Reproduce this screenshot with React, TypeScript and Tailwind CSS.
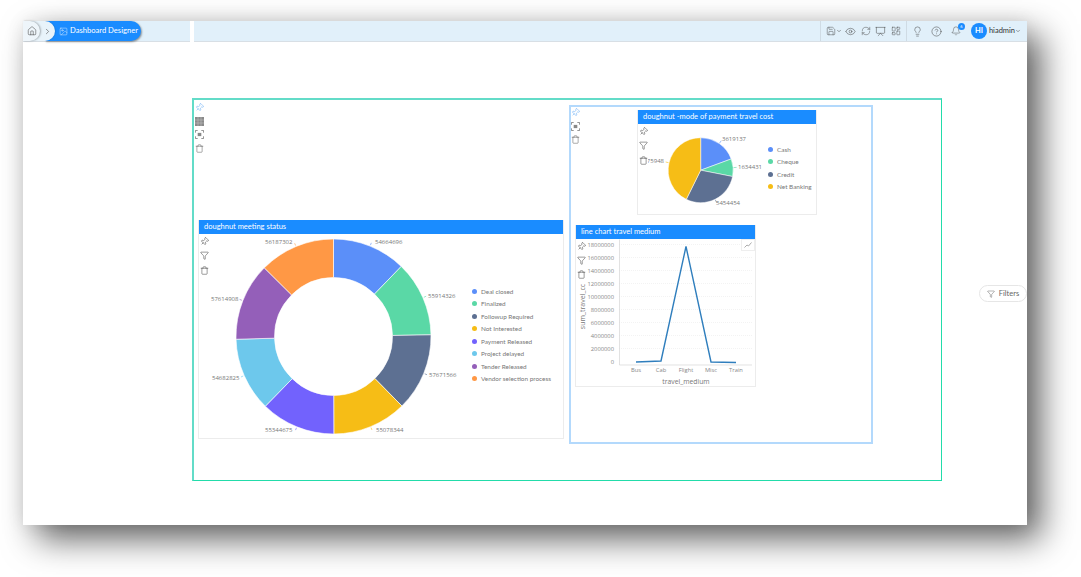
import {
  Bell,
  ChevronDown,
  ChevronRight,
  CircleHelp,
  Eye,
  Funnel,
  House,
  Image,
  LayoutDashboard,
  Lightbulb,
  Pin,
  Presentation,
  RefreshCw,
  Save,
  Trash,
} from "lucide-react";

const meetingData = [
  { name: "Deal closed", value: 54664696, color: "#5b8ff9", x: 375, y: 243.5 },
  { name: "Finalized", value: 55914326, color: "#5ad8a6", x: 428, y: 297.5 },
  { name: "Followup Required", value: 57671566, color: "#5d7092", x: 429, y: 376.5 },
  { name: "Not Interested", value: 55078344, color: "#f6bd16", x: 376, y: 431.5 },
  { name: "Payment Released", value: 55344675, color: "#7262fd", x: 265, y: 431.5 },
  { name: "Project delayed", value: 54682825, color: "#6dc8ec", x: 212, y: 379.5 },
  { name: "Tender Released", value: 57614908, color: "#945fb9", x: 211, y: 300.5 },
  { name: "Vendor selection process", value: 56187302, color: "#ff9845", x: 265, y: 243.5 },
];

const paymentData = [
  { name: "Cash", value: 3619137, color: "#5b8ff9", label: "3619137", x: 722, y: 140.5 },
  { name: "Cheque", value: 1634431, color: "#5ad8a6", label: "1634431", x: 738, y: 168.5 },
  { name: "Credit", value: 5454454, color: "#5d7092", label: "5454454", x: 716, y: 204 },
  { name: "Net Banking", value: 7975948, color: "#f6bd16", label: "7975948", x: 640, y: 162 },
];

const yTicks = ["18000000", "16000000", "14000000", "12000000", "10000000", "8000000", "6000000", "4000000", "2000000", "0"];
const xTicks = [
  { name: "Bus", x: 636 },
  { name: "Cab", x: 661 },
  { name: "Flight", x: 686 },
  { name: "Misc", x: 711 },
  { name: "Train", x: 736 },
];

function polar(cx: number, cy: number, r: number, deg: number) {
  const a = ((deg - 90) * Math.PI) / 180;
  return [cx + r * Math.cos(a), cy + r * Math.sin(a)];
}

function slicePath(cx: number, cy: number, r: number, inner: number, from: number, to: number) {
  const [x1, y1] = polar(cx, cy, r, from);
  const [x2, y2] = polar(cx, cy, r, to);
  const large = to - from > 180 ? 1 : 0;
  if (inner === 0) return `M${cx} ${cy}L${x1} ${y1}A${r} ${r} 0 ${large} 1 ${x2} ${y2}Z`;
  const [x3, y3] = polar(cx, cy, inner, to);
  const [x4, y4] = polar(cx, cy, inner, from);
  return `M${x1} ${y1}A${r} ${r} 0 ${large} 1 ${x2} ${y2}L${x3} ${y3}A${inner} ${inner} 0 ${large} 0 ${x4} ${y4}Z`;
}

function withAngles<T extends { value: number }>(rows: T[]) {
  const total = rows.reduce((sum, r) => sum + r.value, 0);
  let at = 0;
  return rows.map((r) => {
    const from = at;
    at += (r.value / total) * 360;
    return { ...r, from, to: at };
  });
}

function ScanIcon() {
  return (
    <svg width="9" height="9" viewBox="0 0 10 10" fill="none" stroke="#666" strokeWidth="0.8">
      <path d="M0.5 3V0.5H3M7 0.5H9.5V3M9.5 7V9.5H7M3 9.5H0.5V7" />
      <rect x="3" y="3.2" width="4" height="3.6" fill="#888" stroke="none" />
    </svg>
  );
}

function GridIcon() {
  return (
    <svg width="9" height="9" viewBox="0 0 9 9">
      <rect width="9" height="9" fill="#8a8a8a" />
      <path d="M0 3H9M0 6H9M3 0V9M6 0V9" stroke="#c4c4c4" strokeWidth="0.5" />
    </svg>
  );
}

function Legend({ rows }: { rows: { name: string; color: string }[] }) {
  return (
    <ul className="flex flex-col gap-[5px] font-['Lato','Liberation_Sans',sans-serif] text-[6.4px] leading-[7.5px] text-[#777]">
      {rows.map((r) => (
        <li key={r.name} className="flex items-center gap-[4.5px] whitespace-nowrap">
          <span className="h-[5px] w-[5px] rounded-full" style={{ background: r.color }} />
          {r.name}
        </li>
      ))}
    </ul>
  );
}

function WidgetTitle({ children }: { children: string }) {
  return (
    <div className="flex h-[13.5px] shrink-0 items-center bg-[#1a8cff] pl-[5px] font-['Lato','Liberation_Sans',sans-serif] text-[7.5px] text-white">
      {children}
    </div>
  );
}

function WidgetTools({ top, gaps }: { top: string; gaps: string }) {
  return (
    <div className={`absolute left-0 flex w-[10px] flex-col items-center bg-white pb-[2px] text-[#333] ${top} ${gaps}`}>
      <Pin size={9} strokeWidth={1.3} className="rotate-45" />
      <Funnel size={9} strokeWidth={1.3} />
      <Trash size={9} strokeWidth={1.3} />
    </div>
  );
}

function MeetingChart() {
  return (
    <svg className="block h-[205px] w-[270px] shrink-0" viewBox="199 233.5 270 205">
      {withAngles(meetingData).map((s) => {
        const mid = (s.from + s.to) / 2;
        const [lx1, ly1] = polar(333.5, 336, 98.5, mid);
        const [lx2, ly2] = polar(333.5, 336, 101, mid);
        return (
          <g key={s.name}>
            <path d={slicePath(333.5, 336, 97.5, 59, s.from, s.to)} fill={s.color} stroke="#fff" strokeWidth="0.6" />
            <path d={`M${lx1} ${ly1}L${lx2} ${ly2}`} stroke={s.color} strokeWidth="0.6" fill="none" />
            <text x={s.x} y={s.y} fontSize="6" fill="#777" fontFamily="Open Sans, sans-serif">
              {s.value}
            </text>
          </g>
        );
      })}
    </svg>
  );
}

function PaymentChart() {
  return (
    <svg className="block h-[90px] w-[129px] shrink-0" viewBox="638 123.5 129 90">
      {withAngles(paymentData).map((s) => {
        const mid = (s.from + s.to) / 2;
        const [lx1, ly1] = polar(700.7, 169.7, 33, mid);
        const [lx2, ly2] = polar(700.7, 169.7, 36, mid);
        return (
          <g key={s.name}>
            <path d={slicePath(700.7, 169.7, 32.5, 0, s.from, s.to)} fill={s.color} stroke="#fff" strokeWidth="0.5" />
            <path d={`M${lx1} ${ly1}L${lx2} ${ly2}`} stroke={s.color} strokeWidth="0.6" fill="none" />
            <text x={s.x} y={s.y} fontSize="6" fill="#777" fontFamily="Open Sans, sans-serif">
              {s.label}
            </text>
          </g>
        );
      })}
    </svg>
  );
}

function TravelChart() {
  return (
    <svg className="block h-[148px] w-[179px]" viewBox="576 238.5 179 148" fontFamily="Open Sans, sans-serif">
      {yTicks.map((t, i) => {
        const y = 244 + i * 13;
        return (
          <g key={t}>
            {i < 9 && <path d={`M619 ${y}H752`} stroke="#e6e6e6" strokeWidth="0.5" strokeDasharray="1 1" />}
            <text x="614" y={y + 2} fontSize="5.8" fill="#888" textAnchor="end">
              {t}
            </text>
          </g>
        );
      })}
      <path d="M619.5 239V364.5H752" stroke="#d5d5d5" strokeWidth="0.7" fill="none" />
      <polyline points="636,361.5 661,360.5 686,246 711,361.5 736,362" fill="none" stroke="#2f7ebd" strokeWidth="1.4" />
      {xTicks.map((t) => (
        <text key={t.name} x={t.x} y="371.5" fontSize="5.8" fill="#888" textAnchor="middle">
          {t.name}
        </text>
      ))}
      <text x="686" y="383.5" fontSize="6.8" fill="#777" textAnchor="middle">
        travel_medium
      </text>
      <text transform="translate(584.5 306) rotate(-90)" fontSize="7" fill="#777" textAnchor="middle">
        sum_travel_cc
      </text>
    </svg>
  );
}

export default function App() {
  return (
    <div className="h-[577px] w-[1081px] overflow-hidden bg-white pl-[23px] pt-[21px]">
      <div className="relative h-[504px] w-[1004px] bg-white shadow-[14px_14px_32px_rgba(0,0,0,0.62),0_0_18px_rgba(0,0,0,0.07)]">
        <header className="flex h-[21px] gap-[4px] font-['Lato','Liberation_Sans',sans-serif]">
          <div className="flex w-[167px] items-center border-b border-[#d8dfe5] bg-[#e1f0fa]">
            <div className="z-20 flex h-[20px] w-[17px] items-center justify-center rounded-r-full bg-[#eef5fa] shadow-[1px_0_2px_rgba(0,0,0,0.3)]">
              <House size={10} strokeWidth={1.3} className="text-[#444]" />
            </div>
            <div className="z-10 -ml-[6px] flex h-[20px] w-[21px] items-center justify-end rounded-r-full bg-[#e8f3fa] pr-[3px] shadow-[1px_0_1px_rgba(0,0,0,0.1)]">
              <ChevronRight size={9} strokeWidth={1.5} className="text-[#444]" />
            </div>
            <div className="-ml-[10px] flex h-[20px] w-[96px] items-center rounded-r-full bg-[#1a8cff] pl-[14px] text-[7.6px] whitespace-nowrap text-white shadow-[1px_1px_2px_rgba(0,0,0,0.4)]">
              <Image size={9} strokeWidth={1.1} className="mr-[2px] shrink-0" />
              Dashboard Designer
            </div>
          </div>
          <div className="flex flex-1 items-center justify-end border-b border-[#d8dfe5] bg-[#e1f0fa] text-[#444]">
            <div className="flex h-full w-[87px] items-center border-x border-[#cfdbe4] pl-[5px]">
              <Save size={10} strokeWidth={1.1} className="shrink-0" />
              <ChevronDown size={6} className="mr-[3px] shrink-0" />
              <Eye size={11} strokeWidth={1.1} className="mr-[5px] shrink-0" />
              <RefreshCw size={10} strokeWidth={1.1} className="mr-[4px] shrink-0" />
              <Presentation size={11} strokeWidth={1.1} className="mr-[5px] shrink-0" />
              <LayoutDashboard size={10} strokeWidth={1.1} className="shrink-0" />
            </div>
            <Lightbulb size={11} strokeWidth={1.1} className="ml-[5px] mr-[8.5px]" />
            <CircleHelp size={11} strokeWidth={1.1} className="mr-[8.5px]" />
            <div className="relative mr-[10px]">
              <Bell size={10} strokeWidth={1.1} />
              <span className="absolute -right-[4px] -top-[3px] flex h-[7px] w-[7px] items-center justify-center rounded-full bg-[#1a8cff] text-[4px] text-white">
                6
              </span>
            </div>
            <div className="flex h-[16px] w-[16px] items-center justify-center rounded-full bg-[#1a8cff] text-[7.5px] font-bold text-white">
              HI
            </div>
            <span className="ml-[2px] text-[7.5px] text-[#333]">hiadmin</span>
            <ChevronDown size={6} className="mr-[6px]" />
          </div>
        </header>

        <main className="relative pt-[56px]">
          <section className="relative ml-[169px] flex h-[383px] w-[750px] border-t-2 border-l-2 border-r border-b border-t-[#63dcc8] border-l-[#63dcc8] border-r-[#22dcaa] border-b-[#22dcaa]">
            <div className="absolute left-[0.5px] top-[3px] flex w-[9px] flex-col items-center gap-[4.5px] text-[#444]">
              <Pin size={9} strokeWidth={1.2} className="rotate-45 text-[#4a9ff5]" />
              <GridIcon />
              <ScanIcon />
              <Trash size={9} strokeWidth={1.2} />
            </div>

            <div className="ml-[4px] mt-[120px] flex h-[219px] w-[366px] flex-col border-x border-b border-[#ececec]">
              <WidgetTitle>doughnut meeting status</WidgetTitle>
              <div className="relative flex">
                <WidgetTools top="top-[3px]" gaps="gap-[5.5px]" />
                <MeetingChart />
                <div className="ml-[2.5px] mt-[54px]">
                  <Legend rows={meetingData} />
                </div>
              </div>
            </div>

            <div className="relative ml-[5px] mt-[5px] flex h-[339px] w-[304px] flex-col border-2 border-[#b3d9fc]">
              <div className="absolute left-0 top-[1px] flex w-[9px] flex-col items-center gap-[4.5px] text-[#444]">
                <Pin size={9} strokeWidth={1.2} className="rotate-45 text-[#4a9ff5]" />
                <ScanIcon />
                <Trash size={9} strokeWidth={1.2} />
              </div>

              <div className="ml-[66px] mt-[3px] flex h-[105px] w-[180px] flex-col border-x border-b border-[#ececec]">
                <WidgetTitle>doughnut -mode of payment travel cost</WidgetTitle>
                <div className="relative flex">
                  <PaymentChart />
                  <WidgetTools top="top-[3px]" gaps="gap-[5.5px]" />
                  <div className="ml-[0.5px] mt-[22px]">
                    <Legend rows={paymentData} />
                  </div>
                </div>
              </div>

              <div className="ml-[4px] mt-[10px] flex h-[162px] w-[181px] flex-col border-x border-b border-[#ececec]">
                <WidgetTitle>line chart travel medium</WidgetTitle>
                <div className="relative">
                  <TravelChart />
                  <WidgetTools top="top-[3px]" gaps="gap-[5px]" />
                  <div className="absolute right-0 top-0 flex h-[12px] w-[14px] items-center justify-center border border-[#eee] bg-white">
                    <svg width="8" height="6" viewBox="0 0 8 6" fill="none" stroke="#888" strokeWidth="0.7">
                      <path d="M0.5 5.5L3 3L4.5 4L7.5 0.5" />
                    </svg>
                  </div>
                </div>
              </div>
            </div>
          </section>

          <button className="absolute right-0 top-[243px] flex h-[17px] w-[48px] items-center justify-center gap-[4px] rounded-full border border-[#e6e6e6] bg-white font-['Lato','Liberation_Sans',sans-serif] text-[7.5px] text-[#666]">
            <Funnel size={8} strokeWidth={1.2} className="text-[#444]" />
            Filters
          </button>
        </main>
      </div>
    </div>
  );
}
